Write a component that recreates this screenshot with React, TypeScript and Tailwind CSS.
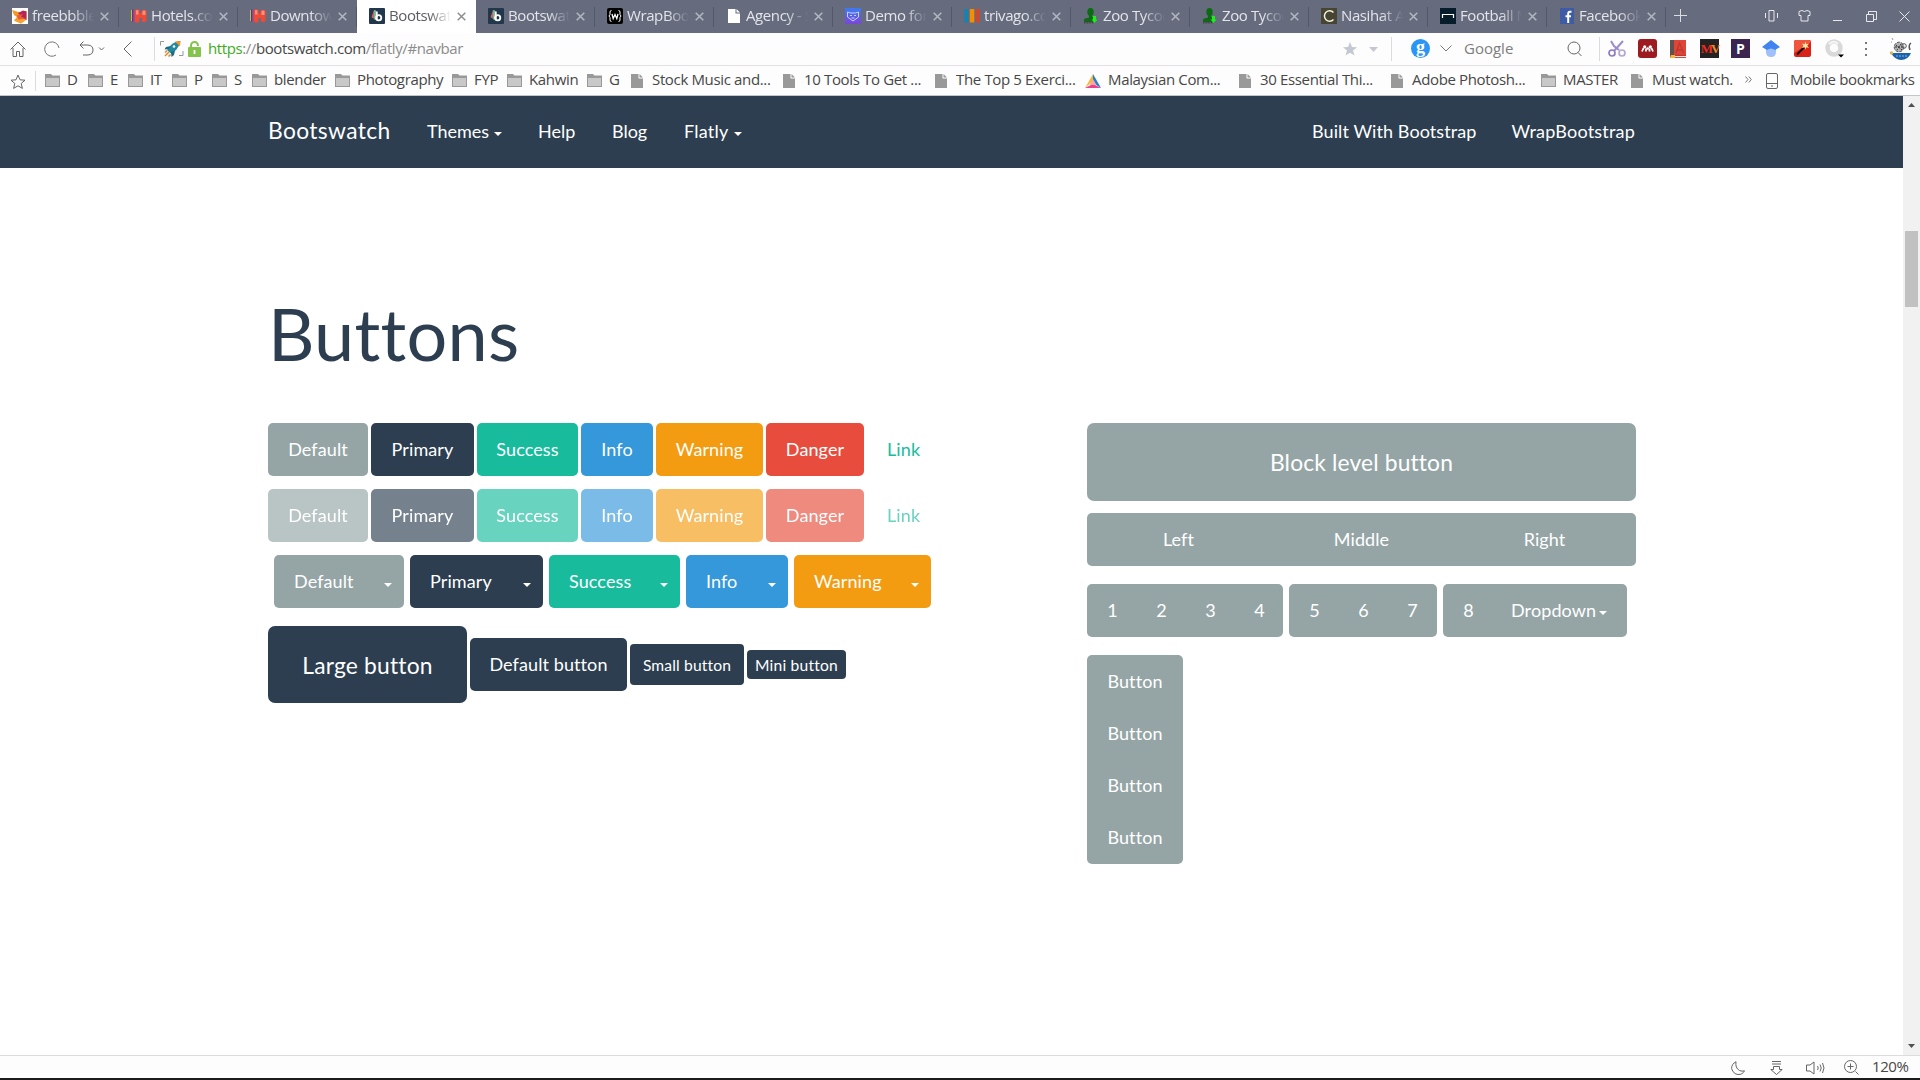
import React from "react";

type Kids = { children?: React.ReactNode };

function Svg({ w = 16, h = 16, box, children, cls = "" }: Kids & { w?: number; h?: number; box?: string; cls?: string }) {
  return (
    <svg width={w} height={h} viewBox={box ?? `0 0 ${w} ${h}`} fill="none" className={"block shrink-0 " + cls}>
      {children}
    </svg>
  );
}

const Hotels = () => (
  <Svg>
    <path d="M0.500 2v11" stroke="#a6ce39" />
    <path d="M1.800 1.500v12" stroke="#5b2d8e" strokeWidth="1.400" />
    <path d="M3 2v12" stroke="#d8388a" />
    <path d="M4 2q2-1.500 4.500 0v3h2V2.500q2.500-1.500 5 0V13q-2 2-4.500.5V10H8.500v4q-2 1.500-4.500 0z" fill="#ee4a38" />
    <path d="M5 2.500q1.500-1 2.500 0v4H5zM11.500 3q1.500-1 3 0v4h-3z" fill="#ff9079" />
  </Svg>
);
const Bootswatch = () => (
  <Svg>
    <rect width="16" height="16" rx="1" fill="#22374b" />
    <path d="M5 2l2.500 1v9L3 9.500z" fill="#2aa5dc" />
    <path d="M5 2.500L2.500 9l2 1.500z" fill="#e8573f" />
    <path d="M6 2v10" stroke="#f3c22f" strokeWidth=".8" />
    <path d="M7.800 3.500v8" stroke="#fff" strokeWidth="1.800" />
    <circle cx="9.700" cy="9.700" r="2.600" stroke="#fff" strokeWidth="1.800" />
  </Svg>
);
const Zoo = () => (
  <Svg>
    <ellipse cx="7.500" cy="4" rx="3.200" ry="4" fill="#0b6b12" />
    <path d="M6 6h3v3l4 1.500v3.500H1v-3l5-1.500z" fill="#0b6b12" />
    <path d="M1 14.500h10" stroke="#444" strokeWidth="2" strokeDasharray="1 .6" />
    <path d="M10 8h3v3.500h1.500L11.500 15l-3-3.500H10z" fill="#1bf01b" />
  </Svg>
);
const PageIcon = ({ color }: { color: string }) => (
  <Svg w={12} h={14}>
    <path d="M0 0h7.500v4.500H12V14H0z" fill={color} />
    <path d="M8.500 0L12 3.500H8.500z" fill={color} />
  </Svg>
);

const tabs: { t: string; icon: React.ReactNode; active?: boolean }[] = [
  {
    t: "freebbble",
    icon: (
      <Svg>
        <rect width="16" height="16" fill="#fff" />
        <path d="M0 2l8 2.500L14.500 3v8.500L9 15.500l-7-3 3-3.500-3-2z" fill="#f59a23" />
        <path d="M6 5l5-2.500 3.500 1V12L11 11z" fill="#b32656" />
        <path d="M4.500 7.500L11 6 9 8.500l5 2.500-7 1z" fill="#ef5b3a" />
        <path d="M2 12.500l9-1.500 3 .5-5 4z" fill="#f7a531" />
      </Svg>
    ),
  },
  { t: "Hotels.com", icon: <Hotels /> },
  { t: "Downtown", icon: <Hotels /> },
  { t: "Bootswatch", icon: <Bootswatch />, active: true },
  { t: "Bootswatch", icon: <Bootswatch /> },
  {
    t: "WrapBoot",
    icon: (
      <Svg>
        <rect width="16" height="16" rx="2" fill="#000" />
        <path d="M4.500 2.500Q3 2.500 3 4v2.500L2 8l1 1.500V12q0 1.500 1.500 1.500M11.500 2.500Q13 2.500 13 4v2.500l1 1.500-1 1.500V12q0 1.500-1.500 1.500" stroke="#fff" />
        <path d="M5 6l1.200 4.500L8 6.500l1.800 4L11 6" stroke="#fff" strokeWidth="1.300" />
      </Svg>
    ),
  },
  { t: "Agency - S", icon: <div className="pl-0.5"><PageIcon color="#fff" /></div> },
  {
    t: "Demo for",
    icon: (
      <Svg>
        <defs>
          <linearGradient id="demo" x1="0" y1="0" x2="0" y2="1">
            <stop stopColor="#3c7cf0" />
            <stop offset="1" stopColor="#7b45d8" />
          </linearGradient>
        </defs>
        <rect width="16" height="16" fill="url(#demo)" />
        <path d="M2.500 4l3 1h5l3-1v5l-5.500 4-5.500-4z" stroke="#c6d4ff" />
        <path d="M5 7.500h2M9 7.500h2M6.500 10h3" stroke="#c6d4ff" />
      </Svg>
    ),
  },
  {
    t: "trivago.com",
    icon: (
      <Svg>
        <rect y="1" width="4.500" height="13.500" fill="#1b80ad" />
        <rect x="5.800" y="1" width="4.500" height="13.500" fill="#f48f00" />
        <rect x="11.500" y="1" width="4.500" height="13.500" fill="#c94a2f" />
      </Svg>
    ),
  },
  { t: "Zoo Tycoon", icon: <Zoo /> },
  { t: "Zoo Tycoon", icon: <Zoo /> },
  {
    t: "Nasihat A",
    icon: (
      <Svg>
        <rect width="16" height="16" fill="#454532" />
        <path d="M12.500 4.500A5.200 5.200 0 1 0 12.500 11.500" stroke="#f1efe0" strokeWidth="1.500" />
      </Svg>
    ),
  },
  {
    t: "Football M",
    icon: (
      <Svg>
        <rect width="16" height="16" fill="#081d2c" />
        <path d="M2.500 10V6.500h11V10" stroke="#fff" strokeWidth="1.200" />
      </Svg>
    ),
  },
  {
    t: "Facebook",
    icon: (
      <Svg>
        <rect width="14" height="16" x="1" fill="#3f5ba3" />
        <path d="M12.500 3.800H11q-1.800 0-1.800 2V15M6.500 8.200h5.500" stroke="#fff" strokeWidth="2" />
      </Svg>
    ),
  },
];

function Tab({ t, icon, active }: { t: string; icon: React.ReactNode; active?: boolean }) {
  return (
    <div className={"flex h-full w-[119px] shrink-0 items-center pl-3 " + (active ? "bg-white text-[#5c5c64]" : "text-[#e4e5ea]")}>
      <div className="w-4 pb-px">{icon}</div>
      <div className="mb-[3px] ml-1 w-[62px] overflow-hidden whitespace-nowrap text-[15px] leading-5 tracking-[-0.4px] [mask-image:linear-gradient(to_right,#000_65%,transparent_100%)]">
        {t}
      </div>
      <Svg w={9} h={9} cls="ml-[6px] mb-px">
        <path d="M.7.7l7.600 7.600M8.300.7L.7 8.300" stroke={active ? "#8d8d94" : "#b4b7c2"} strokeWidth="1.500" />
      </Svg>
      <div className={"ml-auto h-5 w-px " + (active ? "" : "bg-[#535869]")} />
    </div>
  );
}

function TabStrip() {
  return (
    <div className="flex h-[33px] items-center bg-[#666b7e]">
      {tabs.map((t, i) => (
        <Tab key={i} {...t} />
      ))}
      <Svg w={13} h={13} cls="ml-2 mb-0.5">
        <path d="M6.500 0v13M0 6.500h13" stroke="#dcdde3" />
      </Svg>
      <div className="ml-auto flex items-center pb-px pr-2.5">
        <Svg w={13} h={12}>
          <path d="M.5 3v5M12.500 3v5M4 .5h5v10.500H4z" stroke="#e8e9ee" />
        </Svg>
        <Svg w={13} h={12} cls="ml-5">
          <path d="M1 1.500L4 .5q2.500 2 5 0l3 1v4H10v5.500H3V5.500H1z" stroke="#e8e9ee" />
        </Svg>
        <Svg w={9} h={12} cls="ml-[22px]">
          <path d="M0 10.500h9" stroke="#e8e9ee" />
        </Svg>
        <Svg w={11} h={11} cls="ml-6">
          <path d="M.5 3.500h7v7h-7zM2.500 3V.5h8v8H8" stroke="#e8e9ee" />
        </Svg>
        <Svg w={11} h={11} cls="ml-[22px]">
          <path d="M.5.5l10 10M10.500.5l-10 10" stroke="#e8e9ee" />
        </Svg>
      </div>
    </div>
  );
}

function AddressBar() {
  return (
    <div className="flex h-8 items-center bg-[#fdfdfd] pb-px">
      <Svg w={16} h={16} cls="ml-2.5">
        <path d="M.5 8.500L8 1l7.500 7.500M3 7v8.500h3.500v-5h3v5H13V7" stroke="#666" />
      </Svg>
      <Svg w={16} h={16} cls="ml-[18px]">
        <path d="M15 7A7.200 7.200 0 1 0 12 14" stroke="#777" />
      </Svg>
      <Svg w={26} h={16} cls="ml-[19px]">
        <path d="M4.500 0.500L1 4l3.500 3.500M1 4h8q5 .5 5 5t-5 5H4" stroke="#666" />
        <path d="M20 6.500l2.500 2.500L25 6.500" stroke="#666" />
      </Svg>
      <Svg w={9} h={16} cls="ml-[18px]">
        <path d="M8.500.5L1 8l7.500 7.500" stroke="#666" />
      </Svg>
      <div className="ml-[22px] h-6 w-px bg-[#dcdcdc]" />
      <Svg w={24} h={16} cls="ml-[5px]">
        <path d="M.5 4.500v-4H4M19 14.500h4V10" stroke="#999" />
        <path d="M20.500 0q-6 .5-9.500 4L7 9l4.500 4 5-4.500q3.500-4 4-8.500z" fill="#2389a0" />
        <path d="M15 0.500l5.500-.5-.5 5.500z" fill="#f5942b" />
        <path d="M11 5L6 6l-1.500 2.500L9 8zM15 9.500l-1 4.500-2.500 2-.5-5z" fill="#1c6c83" />
        <circle cx="14" cy="5.500" r="1.300" fill="#fff" />
        <path d="M5 15l4-4M5 11.500l2-2M8.500 15.500l2-2" stroke="#e5852b" strokeWidth="1.500" />
      </Svg>
      <Svg w={13} h={16} cls="ml-1">
        <path d="M3 7V4.500a3.500 3.500 0 0 1 7 0V5" stroke="#84c44c" strokeWidth="2" />
        <rect y="6" width="13" height="10" rx="1" fill="#84c44c" />
        <path d="M6.500 9v4" stroke="#fff" strokeWidth="1.800" />
      </Svg>
      <div className="ml-[7px] pb-0.5 whitespace-nowrap text-[15px] leading-5 tracking-[-0.4px] text-[#8c8c8c]">
        <span className="text-[#3fab1d]">https</span>://<span className="text-[#474747]">bootswatch.com</span>/flatly/#navbar
      </div>
      <div className="ml-auto flex items-center">
        <Svg w={14} h={14}>
          <path d="M7 0l2 5 5 .3-4 3.200 1.500 5L7 10.700 2.500 13.500l1.500-5-4-3.200L5 5z" fill="#c6c8d1" />
        </Svg>
        <Svg w={9} h={5} cls="ml-3 mt-px">
          <path d="M0 0h9L4.500 5z" fill="#c6c8d1" />
        </Svg>
        <div className="ml-[13px] h-6 w-px bg-[#dcdcdc]" />
        <div className="ml-[19px] flex h-[19px] w-[19px] items-center justify-center rounded-full bg-[#2b95f5] pb-1 font-['Liberation_Serif'] text-[18px] font-bold leading-none text-white">g</div>
        <Svg w={12} h={7} cls="ml-2.5">
          <path d="M.5.5L6 6 11.500.5" stroke="#777" />
        </Svg>
        <div className="ml-3 w-[103px] pb-0.5 text-[15px] leading-5 text-[#7d7d7d]">Google</div>
        <Svg w={16} h={16}>
          <circle cx="7" cy="7" r="6" stroke="#666" />
          <path d="M11 11.500l3.500 3.500" stroke="#666" />
        </Svg>
        <div className="ml-4 h-6 w-px bg-[#dcdcdc]" />
        <Svg w={18} h={17} cls="ml-2">
          <path d="M3 1l3 5 5 4M15 1L6 11" stroke="#9c8cc8" strokeWidth="2" />
          <circle cx="4" cy="13" r="3" stroke="#8d7bc2" strokeWidth="1.700" />
          <circle cx="14" cy="13" r="3" stroke="#b3a8d6" strokeWidth="1.700" />
        </Svg>
        <Svg w={19} h={19} cls="ml-[12px]">
          <rect width="19" height="19" rx="3" fill="#9c1a20" />
          <path d="M4 12.500l1.500-3.500M8 12.500V9.500M11.500 12.500V9.500M15 12.500L13.500 9" stroke="#fff" strokeWidth="1.800" />
          <circle cx="6.700" cy="7.800" r="1.600" fill="#fff" />
          <circle cx="12.300" cy="7.800" r="1.600" fill="#fff" />
          <circle cx="9.700" cy="9.500" r="1.300" fill="#fff" />
        </Svg>
        <Svg w={16} h={18} cls="ml-[13px]">
          <rect width="16" height="18" fill="#e04438" />
          <rect width="4" height="16" fill="#5c5350" />
          <path d="M0 15.500h16M6 13L9.500 3l4 10M7 10h5" stroke="#b93a30" strokeWidth="1.300" />
          <path d="M1 15h4v3H0z" fill="#f3b83c" />
          <path d="M5 16.500h11" stroke="#eee" />
        </Svg>
        <div className="ml-[14px] flex h-[19px] w-[19px] items-center justify-center bg-[#232323] font-['Liberation_Serif'] text-[13px] font-bold leading-none tracking-[-2px] text-[#f02a1c]">
          M<span className="text-[#f08a24]">V</span>
        </div>
        <div className="ml-3 flex h-[19px] w-[19px] items-center justify-center bg-[#3b2450] text-[14px] font-bold leading-none text-white">P</div>
        <Svg w={18} h={17} cls="ml-[12px]">
          <path d="M4 8h10v4q0 5-5 5t-5-5z" fill="#a0c0fa" />
          <path d="M9 0l9 7-5 3q-4-3-8 0L0 7z" fill="#4184f0" />
        </Svg>
        <Svg w={17} h={17} cls="ml-[14px]">
          <rect width="17" height="17" rx="2" fill="#d92116" />
          <path d="M0 2q0-2 2-2h13q2 0 2 2L0 13z" fill="#f0563e" />
          <path d="M3 14.500l7-7" stroke="#111" strokeWidth="2" />
          <path d="M11.500 1.500l.8 2.700 2.700-.7-1.700 2.200 1.700 2.300-2.700-.8-.8 2.500-.8-2.500L8 8l1.500-2.300L8 3.500l2.700.7z" fill="#fbe6a0" />
        </Svg>
        <Svg w={19} h={19} cls="ml-[14px]">
          <circle cx="9" cy="9" r="6.500" stroke="#d9d9d9" strokeWidth="4.500" />
          <path d="M4 5q5-4 9 0" stroke="#f2f2f2" strokeWidth="2.500" />
          <path d="M13 15.500h6l-3 3z" fill="#000" />
        </Svg>
        <Svg w={3} h={16} cls="ml-5">
          <path d="M1 1h2v2H1zM1 7h2v2H1zM1 13h2v2H1z" fill="#777" />
        </Svg>
        <Svg w={24} h={24} cls="ml-[22px] mr-[7px]">
          <path d="M3 1l1 2M2 5h1" stroke="#999" />
          <circle cx="10" cy="10" r="4.800" fill="#b5b5b5" />
          <path d="M7 8l6 5M12 7l-4 6M6 10h8" stroke="#333" strokeDasharray="2 1" />
          <circle cx="10" cy="10" r="4.800" stroke="#555" strokeDasharray="3 1" />
          <circle cx="15" cy="9" r="2.300" stroke="#555" />
          <path d="M22 6q-3 2-1 7" stroke="#555" strokeWidth="1.500" />
          <path d="M2 16h20q-3 7-10 7-6 0-10-7z" fill="#1c62ab" />
          <path d="M7 19h11" stroke="#8fb5dc" strokeDasharray="2 1" />
          <circle cx="2.500" cy="16" r="1.800" fill="#d9b865" />
        </Svg>
      </div>
    </div>
  );
}

const Folder = () => (
  <Svg w={15} h={13}>
    <path d="M0 0h6l1.500 1.500H15V13H0z" fill="#999" />
    <path d="M1 4h13v8H1z" fill="#c8c8c8" />
  </Svg>
);
const Prism = () => (
  <Svg w={16} h={14}>
    <path d="M8 0l8 14-8-5z" fill="#2280d0" />
    <path d="M8 0v7L0 14z" fill="#f9b53c" />
    <path d="M0 14l8-4 8 4z" fill="#ec3f8c" />
    <path d="M8 5l3.500 6h-7z" fill="#f7a9a0" />
  </Svg>
);

type Kind = "f" | "p" | "t";
const marks: [string, Kind, string][] = [
  ["D", "f", "w-[43px]"],
  ["E", "f", "w-[40px]"],
  ["IT", "f", "w-[44px]"],
  ["P", "f", "w-[40px]"],
  ["S", "f", "w-[40px]"],
  ["blender", "f", "w-[83px]"],
  ["Photography", "f", "w-[117px]"],
  ["FYP", "f", "w-[55px]"],
  ["Kahwin", "f", "w-[80px]"],
  ["G", "f", "w-[44px]"],
  ["Stock Music and...", "p", "w-[152px]"],
  ["10 Tools To Get ...", "p", "w-[152px]"],
  ["The Top 5 Exerci...", "p", "w-[150px]"],
  ["Malaysian Com...", "t", "w-[154px]"],
  ["30 Essential Thi...", "p", "w-[152px]"],
  ["Adobe Photosh...", "p", "w-[150px]"],
  ["MASTER", "f", "w-[90px]"],
  ["Must watch.", "p", "w-[114px]"],
];

function Bookmarks() {
  return (
    <div className="flex h-[31px] items-center border-b border-t border-b-[#c3c6c9] border-t-[#e2e2e2] bg-[#fdfdfd] text-[15px] leading-5 tracking-[-0.35px] text-[#474747]">
      <Svg w={16} h={15} cls="ml-2.5 mt-0.5">
        <path d="M8 1l2 4.800 5 .4-3.800 3.300 1.200 4.900L8 11.800l-4.400 2.600 1.200-4.900L1 6.200l5-.4z" stroke="#666" />
      </Svg>
      <div className="ml-[9px] mr-[9px] h-5 w-px bg-[#dcdcdc]" />
      {marks.map(([t, k, w], i) => (
        <div key={i} className={"flex shrink-0 items-center whitespace-nowrap " + w}>
          <div className={k === "p" ? "w-[21px]" : k === "t" ? "w-[23px]" : "w-[22px]"}>
            {k === "f" ? <Folder /> : k === "p" ? <PageIcon color="#999" /> : <Prism />}
          </div>
          <span className="pb-[3px]">{t}</span>
        </div>
      ))}
      <Svg w={7} h={7} cls="mb-0.5">
        <path d="M.5.5l2.500 3-2.500 3M3.800.5l2.500 3-2.500 3" stroke="#777" />
      </Svg>
      <Svg w={12} h={16} cls="ml-[14px]">
        <rect x=".5" y=".5" width="11" height="15" rx="1.500" stroke="#666" />
        <path d="M.5 10.500h11M5 13h2" stroke="#666" />
      </Svg>
      <div className="ml-3 whitespace-nowrap pb-[3px]">Mobile bookmarks</div>
    </div>
  );
}

const Caret = ({ cls = "" }: { cls?: string }) => (
  <Svg w={8} h={4} cls={cls}>
    <path d="M0 0h8L4 4z" fill="currentColor" />
  </Svg>
);

function Navbar() {
  return (
    <nav className="flex h-[72px] shrink-0 items-center bg-[#2c3e50] pb-0.5 pl-[268px] pr-[268px] text-[18px] leading-6 text-white">
      <div className="w-[159px] pb-0.5 text-[22.8px] tracking-[0.36px]">Bootswatch</div>
      <div className="flex w-[111px] items-center">Themes<Caret cls="ml-[5px] mt-1.5" /></div>
      <div className="w-[74px]">Help</div>
      <div className="w-[72px]">Blog</div>
      <div className="flex items-center tracking-[0.25px]">Flatly<Caret cls="ml-[5px] mt-1.5" /></div>
      <div className="ml-auto mr-[35px] tracking-[0.08px]">Built With Bootstrap</div>
      <div className="tracking-[0.2px]">WrapBootstrap</div>
    </nav>
  );
}

const variants: [string, string][] = [
  ["Default", "w-[100px] bg-[#95a5a6]"],
  ["Primary", "w-[103px] bg-[#2c3e50]"],
  ["Success", "w-[101px] bg-[#18bc9c]"],
  ["Info", "w-[72px] bg-[#3498db]"],
  ["Warning", "w-[107px] bg-[#f39c12]"],
  ["Danger", "w-[98px] bg-[#e74c3c]"],
];
const splits: [string, string][] = [
  ["Default", "w-[130px] bg-[#95a5a6]"],
  ["Primary", "w-[133px] bg-[#2c3e50]"],
  ["Success", "w-[131px] bg-[#18bc9c]"],
  ["Info", "w-[102px] bg-[#3498db]"],
  ["Warning", "w-[137px] bg-[#f39c12]"],
];

function ButtonRow({ disabled }: { disabled?: boolean }) {
  return (
    <div className="mb-[13px] flex gap-[3px]">
      {variants.map(([t, c]) => (
        <button key={t} className={"h-[53px] rounded-[5px] pb-0.5 text-center text-white " + c + (disabled ? " opacity-65" : "")}>
          {t}
        </button>
      ))}
      <button className={"ml-5 pb-0.5 text-[#18bc9c]" + (disabled ? " opacity-65" : "")}>Link</button>
    </div>
  );
}

function Group({ items, cls }: { items: string[]; cls: string }) {
  return (
    <div className={"flex h-[53px] items-center rounded-[5px] bg-[#95a5a6] pb-0.5 pl-px text-white " + cls}>
      {items.map((t) => (
        <button key={t} className="w-[49px] shrink-0 text-center">{t}</button>
      ))}
    </div>
  );
}

function Content() {
  return (
    <main className="flex-1 bg-white px-[268px] pt-[125px] text-[18px] leading-6 tracking-[0.1px]">
      <h1 className="h-[130px] text-[72px] leading-[80px] tracking-[0.25px] text-[#2c3e50]">Buttons</h1>
      <div className="flex">
        <div className="w-[819px] shrink-0">
          <ButtonRow />
          <ButtonRow disabled />
          <div className="flex gap-1.5 pl-1.5">
            {splits.map(([t, c]) => (
              <div key={t} className={"flex h-[53px] items-center justify-between rounded-[5px] pb-0.5 pl-5 pr-3 text-white " + c}>
                <span>{t}</span>
                <Caret cls="mt-2" />
              </div>
            ))}
          </div>
          <div className="mt-[18px] flex items-center gap-[3px] text-white">
            <button className="h-[77px] w-[199px] rounded-[7px] bg-[#2c3e50] text-[22.8px] tracking-[0.2px]">Large button</button>
            <button className="h-[53px] w-[157px] rounded-[5px] bg-[#2c3e50] pb-0.5">Default button</button>
            <button className="h-[41px] w-[114px] rounded-[4px] bg-[#2c3e50] text-[15.600px] tracking-[0.15px]">Small button</button>
            <button className="h-[29px] w-[99px] rounded-[4px] bg-[#2c3e50] text-[15.600px] tracking-[0.2px]">Mini button</button>
          </div>
        </div>
        <div className="w-[549px] shrink-0 text-white">
          <button className="block h-[78px] w-full rounded-[7px] bg-[#95a5a6] text-[22.8px] tracking-[0.15px]">Block level button</button>
          <div className="mt-3 grid h-[53px] grid-cols-3 rounded-[5px] bg-[#95a5a6] pb-0.5">
            <button>Left</button>
            <button>Middle</button>
            <button>Right</button>
          </div>
          <div className="mt-[18px] flex gap-1.5">
            <Group items={["1", "2", "3", "4"]} cls="w-[196px]" />
            <Group items={["5", "6", "7"]} cls="w-[148px]" />
            <div className="flex h-[53px] w-[184px] items-center rounded-[5px] bg-[#95a5a6] pb-0.5 pl-px">
              <button className="w-[49px]">8</button>
              <span className="ml-[18px]">Dropdown</span>
              <Caret cls="ml-[3px] mt-1.5" />
            </div>
          </div>
          <div className="mt-[18px] flex h-[209px] w-24 flex-col rounded-[5px] bg-[#95a5a6]">
            {[1, 2, 3, 4].map((n) => (
              <button key={n} className="h-[52px] pb-px">Button</button>
            ))}
          </div>
        </div>
      </div>
    </main>
  );
}

function Scrollbar() {
  return (
    <div className="flex w-[17px] shrink-0 flex-col items-center bg-[#f1f1f1]">
      <Svg w={7} h={4} cls="mt-[7px]">
        <path d="M0 4h7L3.500 0z" fill="#505050" />
      </Svg>
      <div className="mt-[124px] h-[76px] w-[13px] bg-[#c1c1c1]" />
      <Svg w={7} h={4} cls="mb-[7px] mt-auto">
        <path d="M0 0h7L3.500 4z" fill="#505050" />
      </Svg>
    </div>
  );
}

function StatusBar() {
  return (
    <div className="flex h-[23px] items-center justify-end border-t border-[#dcdcdc] bg-[#fdfdfd] pr-[13px] text-[#666]">
      <Svg w={14} h={14} cls="mt-0.5">
        <path d="M5 .7Q4 7 8.500 9.500q2.500 1.200 5 .3-2 4-6.500 3.700T.6 7.500Q.6 3 5 .7z" stroke="#666" />
      </Svg>
      <Svg w={13} h={14} cls="ml-[25px] mt-0.5">
        <path d="M2 .5h9M2 3h9M3.500 5.500v3H.8l5.700 5 5.700-5H9.500v-3z" stroke="#666" />
      </Svg>
      <Svg w={19} h={14} cls="ml-[23px] mt-px">
        <path d="M.5 4h3.500l4-3v12l-4-3H.5zM11.500 5q1.500 2 0 4M14 3.500q2.500 3.500 0 7M16.500 2q3 5 0 10" stroke="#666" />
      </Svg>
      <Svg w={15} h={15} cls="ml-[19px] mt-px">
        <circle cx="6.500" cy="6.500" r="6" stroke="#666" />
        <path d="M3.500 6.500h6M6.500 3.500v6M11.500 11.500l3 3" stroke="#666" />
      </Svg>
      <div className="ml-[13px] w-[35px] whitespace-nowrap pb-0.5 text-[15px] leading-5 tracking-[-0.4px] text-[#474747]">120%</div>
    </div>
  );
}

export default function App() {
  return (
    <div className="flex h-[1080px] w-[1920px] flex-col overflow-hidden bg-white font-['Open_Sans',sans-serif]">
      <TabStrip />
      <AddressBar />
      <Bookmarks />
      <div className="flex min-h-0 flex-1">
        <div className="flex w-[1903px] flex-col font-['Lato',sans-serif] [font-variant-ligatures:none]">
          <Navbar />
          <Content />
        </div>
        <Scrollbar />
      </div>
      <StatusBar />
      <div className="h-0.5 bg-[#1c1c1c]" />
    </div>
  );
}
